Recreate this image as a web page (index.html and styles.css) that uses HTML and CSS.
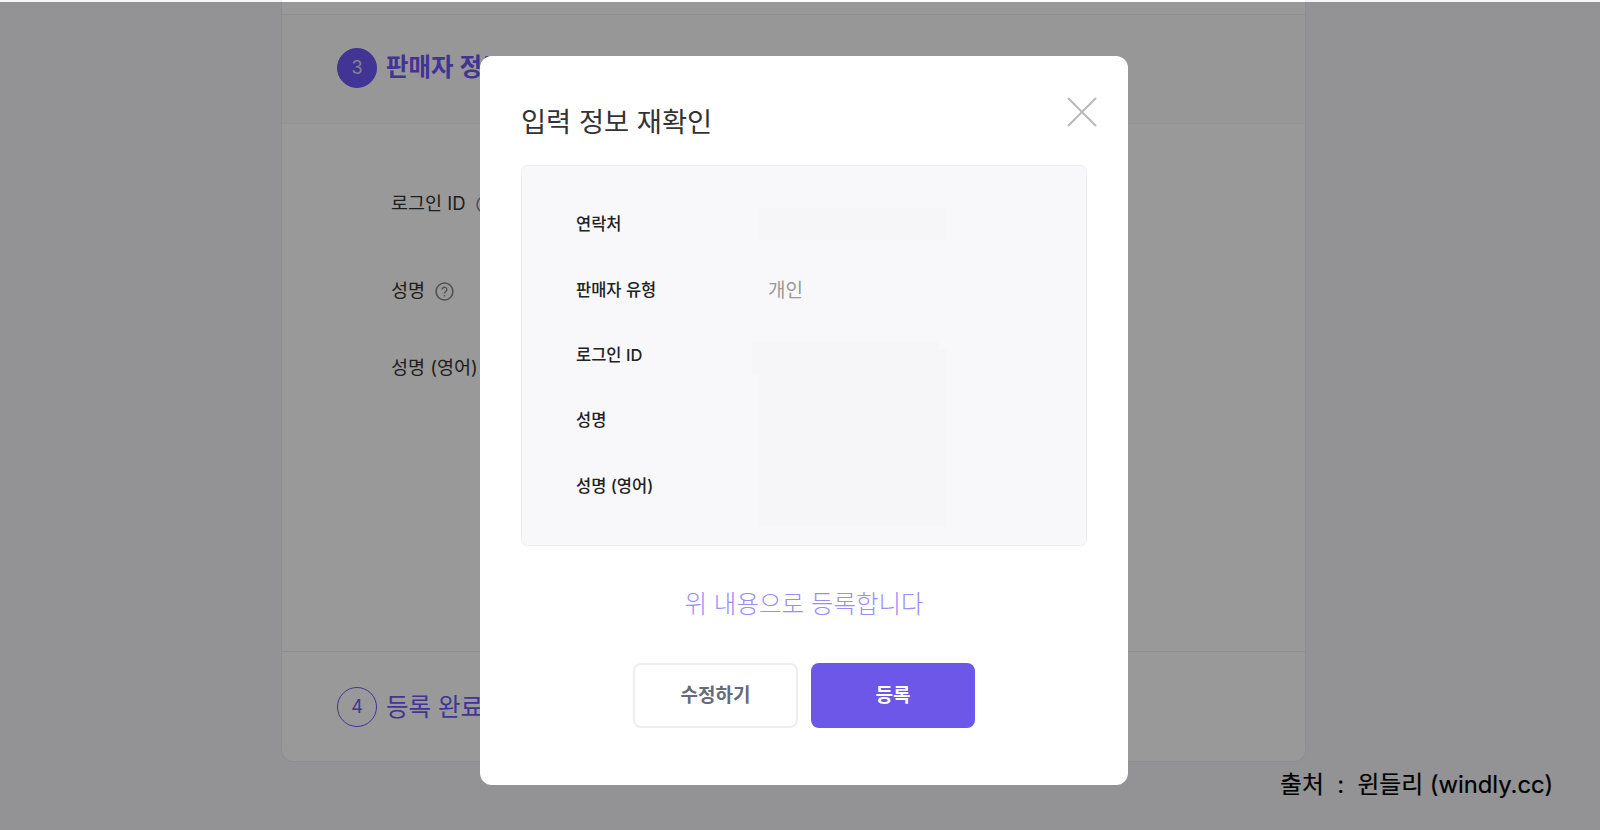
FILE: index.html
```html
<!DOCTYPE html>
<html lang="ko">
<head>
    <meta charset="UTF-8">
    <meta name="viewport" content="width=device-width, initial-scale=1.0">
    <title>입력 정보 재확인</title>
    <link rel="stylesheet" href="styles.css">
</head>
<body>
    <!-- 뒤쪽 등록 페이지 -->
    <div class="page">
        <div class="card">
            <div class="step-head">
                <span class="step-num step-num-on">3</span>
                <span class="step-title step-title-on">판매자 정보</span>
            </div>
            <div class="form">
                <div class="form-row form-row-id">로그인 ID
                    <svg class="help-icon" viewBox="0 0 18 18"><circle cx="9" cy="9" r="8" fill="none" stroke="currentColor" stroke-width="1.5"/><path d="M6.8 7.2a2.2 2.2 0 1 1 3.4 1.8c-.8.5-1.2 1-1.2 1.9" fill="none" stroke="currentColor" stroke-width="1.3"/><circle cx="9" cy="13" r=".8" fill="currentColor"/></svg>
                </div>
                <div class="form-row form-row-name">성명
                    <svg class="help-icon" viewBox="0 0 18 18"><circle cx="9" cy="9" r="8" fill="none" stroke="currentColor" stroke-width="1.5"/><path d="M6.8 7.2a2.2 2.2 0 1 1 3.4 1.8c-.8.5-1.2 1-1.2 1.9" fill="none" stroke="currentColor" stroke-width="1.3"/><circle cx="9" cy="13" r=".8" fill="currentColor"/></svg>
                </div>
                <div class="form-row">성명 (영어)</div>
            </div>
            <div class="step-foot">
                <span class="step-num">4</span>
                <span class="step-title">등록 완료</span>
            </div>
        </div>
    </div>

    <div class="backdrop"></div>

    <!-- 확인 모달 -->
    <div class="modal">
        <div class="modal-head">
            <h2 class="modal-title">입력 정보 재확인</h2>
            <svg class="close-icon" viewBox="0 0 30 30"><path d="M1 1L29 29M29 1L1 29" stroke="#b9b9bc" stroke-width="2" fill="none"/></svg>
        </div>
        <div class="info-box">
            <div class="info-label">연락처</div>
            <div class="hidden-value hidden-one"></div>
            <div class="info-label">판매자 유형</div>
            <div class="info-value">개인</div>
            <div class="info-label">로그인 ID</div>
            <div class="hidden-value hidden-many"></div>
            <div class="info-label">성명</div>
            <div class="info-label">성명 (영어)</div>
        </div>
        <p class="confirm-text">위 내용으로 등록합니다</p>
        <div class="modal-buttons">
            <button class="btn btn-edit">수정하기</button>
            <button class="btn btn-submit">등록</button>
        </div>
    </div>

    <div class="source">출처  :  윈들리 (windly.cc)</div>
</body>
</html>
```

FILE: styles.css
```css
body {
    margin: 0;
    height: 830px;
    overflow: hidden;
    background-color: #f5f5f8;
    font-family: Inter, "Noto Sans CJK KR", sans-serif;
    color: #333;
}
.page {
    display: flex;
    padding-left: 281px;
}
.card {
    width: 1025px;
    height: 762px;
    box-sizing: border-box;
    background-color: white;
    border: 1px solid #ececf0;
    border-top: none;
    border-radius: 0 0 12px 12px;
    display: flex;
    flex-direction: column;
}
.step-head {
    display: flex;
    align-items: center;
    gap: 9px;
    height: 110px;
    margin-top: 14px;
    padding: 0 0 3px 55px;
    box-sizing: border-box;
    border-top: 1px solid #ececf0;
    border-bottom: 1px solid #f7f7f7;
    background-color: #fcfcfc;
}
.step-foot {
    display: flex;
    align-items: center;
    gap: 9px;
    margin-top: auto;
    height: 110px;
    padding-left: 55px;
    box-sizing: border-box;
    border-top: 1px solid #ececf0;
}
.step-num {
    width: 40px;
    height: 40px;
    box-sizing: border-box;
    border-radius: 50%;
    border: 1.5px solid #6e57f8;
    color: #6e57f8;
    font-size: 18px;
    display: flex;
    align-items: center;
    justify-content: center;
}
.step-num-on {
    background-color: #6e57f8;
    color: #ddd;
}
.step-title {
    font-size: 24.5px;
    line-height: 30px;
    color: #6e57f8;
}
.step-title-on {
    font-weight: 700;
    margin-bottom: 1px;
}
.form {
    padding: 63px 0 0 109px;
}
.form-row {
    display: flex;
    align-items: center;
    gap: 10px;
    height: 30px;
    margin-bottom: 47px;
    font-size: 18.5px;
}
.form-row-id {
    margin-bottom: 57px;
}
.help-icon {
    width: 19px;
    height: 19px;
    color: #888;
    margin-top: 4px;
}
.backdrop {
    position: absolute;
    top: 2px;
    left: 0;
    right: 0;
    bottom: 0;
    background-color: rgba(0, 0, 0, 0.4);
}
.modal {
    position: absolute;
    top: 56px;
    left: 480px;
    width: 648px;
    height: 729px;
    box-sizing: border-box;
    padding: 0 41px;
    background-color: white;
    border-radius: 12px;
}
.modal-head {
    display: flex;
    justify-content: space-between;
    height: 109px;
}
.modal-title {
    margin: 47px 0 0;
    font-size: 27.3px;
    line-height: 40px;
    font-weight: 400;
    color: #333;
}
.close-icon {
    width: 30px;
    height: 30px;
    margin-top: 41px;
    margin-right: -10px;
}
.info-box {
    display: grid;
    grid-template-columns: 183px 188px;
    grid-auto-rows: 65.4px;
    align-items: center;
    height: 381px;
    box-sizing: border-box;
    padding: 24.5px 0 0 54px;
    background-color: #f8f8fb;
    border: 1px solid #eeeef1;
    border-radius: 6px;
}
.info-label {
    grid-column: 1;
    font-size: 16.5px;
    font-weight: 500;
    color: #222;
}
.info-value {
    padding-left: 9px;
    font-size: 19px;
    color: #999;
}
.hidden-value {
    background-color: #f6f6f9;
}
.hidden-one {
    height: 32px;
    margin-top: 2px;
}
.hidden-many {
    grid-column: 2;
    grid-row: 3 / 6;
    align-self: start;
    position: relative;
    height: 178px;
    margin-top: 28px;
}
.hidden-many::before {
    content: "";
    position: absolute;
    top: -8px;
    left: -7px;
    width: 186px;
    height: 33px;
    background-color: #f6f6f9;
}
.confirm-text {
    margin: 39px 0 0;
    text-align: center;
    font-size: 24.5px;
    line-height: 38px;
    font-weight: 300;
    color: #9a8df8;
}
.modal-buttons {
    display: flex;
    justify-content: center;
    gap: 13px;
    margin-top: 40px;
}
.btn {
    height: 65px;
    padding: 0 0 4px;
    border-radius: 8px;
    font-family: inherit;
    font-size: 19px;
    font-weight: 700;
    cursor: pointer;
}
.btn-edit {
    width: 165px;
    background-color: white;
    border: 2px solid #eeeef1;
    color: #676a78;
}
.btn-submit {
    width: 164px;
    background-color: #6c57e8;
    border: none;
    color: white;
}
.source {
    position: absolute;
    top: 767px;
    left: 1280px;
    font-size: 23.8px;
    line-height: 36px;
    color: black;
    -webkit-text-stroke: 0.2px black;
    white-space: pre;
}
```
